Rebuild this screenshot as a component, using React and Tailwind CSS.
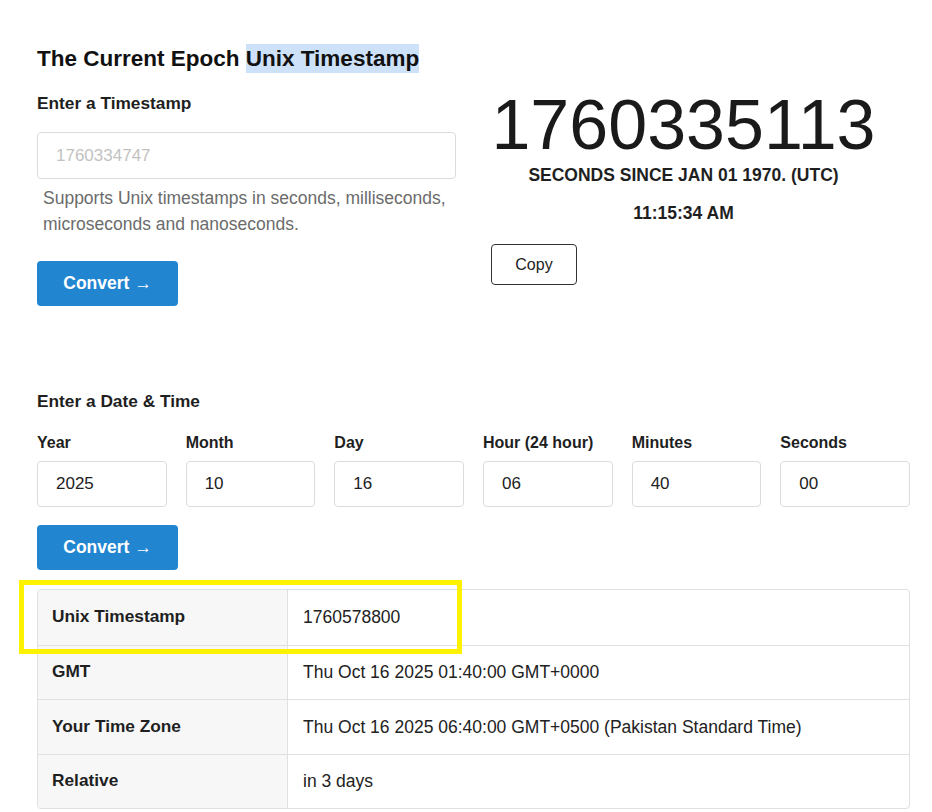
import { useState } from 'react';

const fields = [
  { label: 'Year', value: '2025' },
  { label: 'Month', value: '10' },
  { label: 'Day', value: '16' },
  { label: 'Hour (24 hour)', value: '06' },
  { label: 'Minutes', value: '40' },
  { label: 'Seconds', value: '00' },
];

const results = [
  { label: 'Unix Timestamp', value: '1760578800' },
  { label: 'GMT', value: 'Thu Oct 16 2025 01:40:00 GMT+0000' },
  { label: 'Your Time Zone', value: 'Thu Oct 16 2025 06:40:00 GMT+0500 (Pakistan Standard Time)' },
  { label: 'Relative', value: 'in 3 days' },
];

export default function App() {
  const [stamp, setStamp] = useState('');
  const [parts, setParts] = useState(fields.map(f => f.value));

  return (
    <div className="min-h-screen bg-white font-['Liberation_Sans',Arial,sans-serif] text-[#1f1f1f] pl-[37px] pr-[22px] pt-[44px]">
      {/* Top: timestamp input + live clock */}
      <div className="flex gap-[35px]">
        <div className="w-[419px]">
          <h1 className="text-[22.5px] leading-[30px] font-bold text-[#111]">
            The Current Epoch <span className="bg-[#cde1f9] py-[2px]">Unix Timestamp</span>
          </h1>
          <h2 className="mt-[17px] text-[17.3px] leading-[24px] font-bold">Enter a Timestamp</h2>
          <input
            type="text"
            value={stamp}
            onChange={e => setStamp(e.target.value)}
            placeholder="1760334747"
            className="mt-[17px] block w-full h-[47px] px-[18px] border border-[#dcdcdd] rounded-[4px] text-[17px] text-[#222] placeholder:text-[#c2c2c2] focus:outline-none"
          />
          <p className="mt-[6px] pl-[6px] text-[17.5px] leading-[26px] text-[#6b6b6b]">
            Supports Unix timestamps in seconds, milliseconds, microseconds and nanoseconds.
          </p>
          <button className="mt-[24px] w-[141px] h-[45px] bg-[#2185d0] text-white rounded-[4px] text-[17.5px] font-bold">
            Convert →
          </button>
        </div>

        <div className="w-[385px] mt-[41px] flex flex-col items-center">
          <div className="text-[70px] leading-[80px] text-[#1a1a1a]">1760335113</div>
          <div className="text-[17.5px] leading-[20px] font-bold">SECONDS SINCE JAN 01 1970. (UTC)</div>
          <div className="mt-[18px] text-[17.5px] leading-[20px] font-bold">11:15:34 AM</div>
          <button className="self-start mt-[21px] w-[86px] h-[41px] border border-[#333] rounded-[4px] bg-white text-[16px] text-[#222]">
            Copy
          </button>
        </div>
      </div>

      {/* Date & time form */}
      <h2 className="mt-[83px] text-[17.3px] leading-[24px] font-bold">Enter a Date &amp; Time</h2>
      <div className="mt-[20px] grid grid-cols-6 gap-x-[19px] w-[873px]">
        {fields.map((f, i) => (
          <div key={f.label}>
            <label className="block text-[16px] leading-[20px] font-bold mb-[8px]">{f.label}</label>
            <input
              type="text"
              value={parts[i]}
              onChange={e => setParts(parts.map((p, j) => (j === i ? e.target.value : p)))}
              className="block w-full h-[46px] px-[18px] border border-[#dcdcdd] rounded-[4px] text-[17px] text-[#222] focus:outline-none"
            />
          </div>
        ))}
      </div>
      <button className="mt-[18px] w-[141px] h-[45px] bg-[#2185d0] text-white rounded-[4px] text-[17.5px] font-bold">
        Convert →
      </button>

      {/* Results */}
      <div className="relative mt-[19px] w-[873px]">
        <div className="border border-[#e0e0e0] rounded-[4px] overflow-hidden">
          {results.map((r, i) => (
            <div key={r.label} className={`flex h-[54.5px] ${i > 0 ? 'border-t border-[#e0e0e0]' : ''}`}>
              <div className="w-[250px] shrink-0 bg-[#f7f7f7] border-r border-[#e0e0e0] flex items-center px-[14px] text-[17.3px] font-bold">
                {r.label}
              </div>
              <div className="flex-1 flex items-center px-[15px] text-[17.5px] text-[#222]">{r.value}</div>
            </div>
          ))}
        </div>
        <div className="absolute left-[-18px] top-[-9px] w-[443px] h-[74px] border-[5px] border-[#fff200] pointer-events-none" />
      </div>
    </div>
  );
}
